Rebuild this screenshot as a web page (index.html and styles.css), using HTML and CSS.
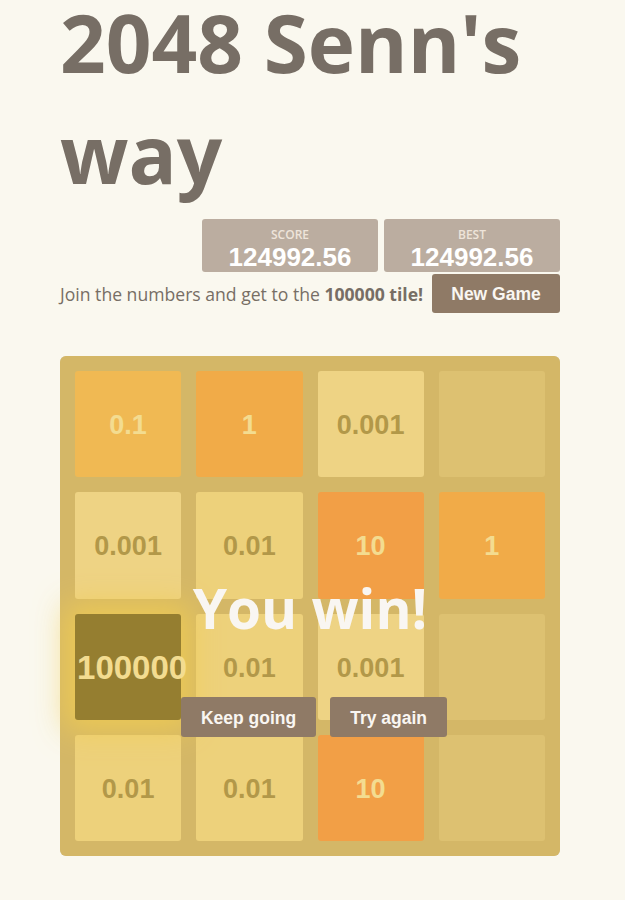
FILE: index.html
```html
<!DOCTYPE html>
<html>
<head>
<meta charset="utf-8">
<link rel="stylesheet" href="styles.css">
</head>
<body>
<div class="container">
  <h1 class="title">2048 Senn's way</h1>
  <div class="scores">
    <div class="score-box"><div class="score-label">SCORE</div><div class="score-value">124992.56</div></div>
    <div class="score-box"><div class="score-label">BEST</div><div class="score-value">124992.56</div></div>
  </div>
  <div class="intro">
    <p class="intro-text">Join the numbers and get to the <strong>100000 tile!</strong></p>
    <a class="btn new-game">New Game</a>
  </div>
  <div class="game">
    <div class="grid">
      <div class="cell t8">0.1</div>
      <div class="cell t16">1</div>
      <div class="cell t2">0.001</div>
      <div class="cell"></div>
      <div class="cell t2">0.001</div>
      <div class="cell t4">0.01</div>
      <div class="cell t32">10</div>
      <div class="cell t16">1</div>
      <div class="cell tsuper">100000</div>
      <div class="cell t4">0.01</div>
      <div class="cell t2">0.001</div>
      <div class="cell"></div>
      <div class="cell t4">0.01</div>
      <div class="cell t4">0.01</div>
      <div class="cell t32">10</div>
      <div class="cell"></div>
    </div>
    <div class="overlay">
      <p class="win">You win!</p>
      <div class="actions">
        <a class="btn">Keep going</a>
        <a class="btn">Try again</a>
      </div>
    </div>
  </div>
</div>
</body>
</html>
```

FILE: styles.css
```css
html, body {
  margin: 0;
  padding: 0;
  background: #faf8ef;
}
.container {
  width: 500px;
  margin: 0 0 0 60px;
}
.title {
  margin: -14px 0 0 0;
  font-family: "Open Sans", sans-serif;
  font-weight: bold;
  font-size: 80px;
  line-height: 111px;
  color: #776e65;
}
.scores {
  display: flex;
  justify-content: flex-end;
  gap: 6px;
  margin-top: 11px;
}
.score-box {
  width: 176px;
  height: 53px;
  background: #bbada0;
  border-radius: 3px;
  text-align: center;
  color: #fff;
  font-family: "Liberation Sans", Arial, sans-serif;
  font-weight: bold;
  box-sizing: border-box;
  padding-top: 8px;
}
.score-label {
  font-size: 12px;
  line-height: 16px;
  color: #eee4da;
  font-family: "Open Sans", sans-serif;
  font-weight: 600;
}
.score-value {
  font-size: 26px;
  line-height: 28px;
}
.intro {
  display: flex;
  justify-content: space-between;
  align-items: center;
  margin-top: 2px;
}
.intro-text {
  margin: 0;
  font-family: "Open Sans", sans-serif;
  font-size: 17.6px;
  color: #776e65;
}
.intro-text strong { font-weight: bold; }
.btn {
  display: inline-block;
  background: #8f7a66;
  color: #f9f6f2;
  border-radius: 3px;
  height: 40px;
  line-height: 42px;
  padding: 0 20px;
  font-family: "Liberation Sans", Arial, sans-serif;
  font-weight: bold;
  font-size: 17.5px;
}
.new-game {
  width: 128px;
  box-sizing: border-box;
  padding: 0;
  text-align: center;
  height: 39px;
  line-height: 41px;
}
.game {
  position: relative;
  margin-top: 43px;
  width: 500px;
  height: 500px;
}
.grid {
  background: #bbada0;
  border-radius: 6px;
  padding: 15px;
  box-sizing: border-box;
  width: 500px;
  height: 500px;
  display: grid;
  grid-template-columns: repeat(4, minmax(0, 1fr));
  grid-template-rows: repeat(4, minmax(0, 1fr));
  gap: 15px;
}
.cell {
  background: rgba(238, 228, 218, 0.35);
  border-radius: 3px;
  display: flex;
  align-items: center;
  justify-content: center;
  padding-top: 3px;
  box-sizing: border-box;
  min-width: 0;
  font-family: "Liberation Sans", Arial, sans-serif;
  font-weight: bold;
  font-size: 27px;
  color: #776e65;
  white-space: nowrap;
}
.t2 { background: #eee4da; }
.t4 { background: #ede0c8; }
.t8 { background: #f2b179; color: #f9f6f2; }
.t16 { background: #f59563; color: #f9f6f2; }
.t32 { background: #f67c5f; color: #f9f6f2; }
.tsuper {
  background: #3c3a32;
  color: #f9f6f2;
  font-size: 33px;
  position: relative;
  z-index: 1;
  padding-left: 8px;
  box-shadow: 0 0 30px 10px rgba(243, 215, 116, 0.85);
}
.overlay {
  position: absolute;
  inset: 0;
  z-index: 2;
  background: rgba(237, 194, 46, 0.5);
  border-radius: 6px;
  text-align: center;
}
.win {
  margin: 222px 0 0 0;
  height: 60px;
  line-height: 60px;
  font-family: "Open Sans", sans-serif;
  font-weight: bold;
  font-size: 55px;
  color: #f9f6f2;
}
.actions {
  margin-top: 59px;
  display: flex;
  justify-content: center;
  gap: 14px;
  padding-left: 8px;
}
```
